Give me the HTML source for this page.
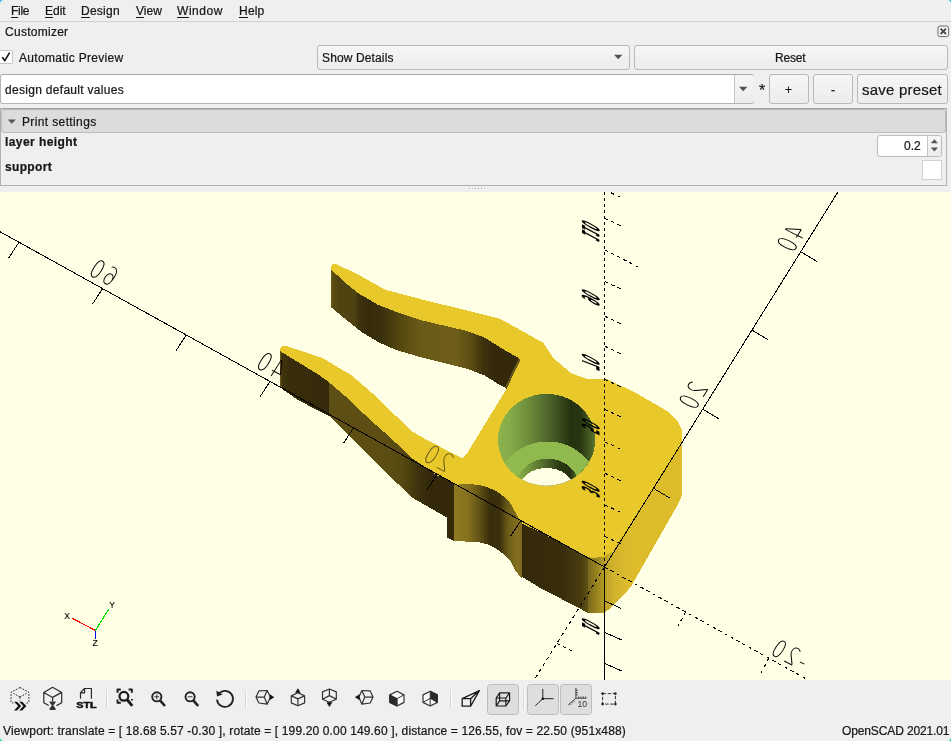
<!DOCTYPE html>
<html><head><meta charset="utf-8"><title>OpenSCAD</title>
<style>
html,body{margin:0;padding:0}
body{width:951px;height:741px;overflow:hidden;background:#efefef;position:relative;font-family:"Liberation Sans",sans-serif;font-size:12px;color:#161616;-webkit-text-stroke:0.22px #161616}
.t{position:absolute;white-space:pre;line-height:14px;height:14px;will-change:transform}
.abs{position:absolute;box-sizing:border-box}
svg{will-change:transform}
.btn{position:absolute;box-sizing:border-box;border:1px solid #b9b9b9;border-radius:3px;background:linear-gradient(#f6f6f6,#ececec);}
u{text-decoration:underline;text-underline-offset:1.6px;text-decoration-thickness:1px}
</style></head><body>
<!-- window corners -->
<svg class="abs" style="left:0;top:0" width="5" height="5" viewBox="0 0 5 5"><path d="M0 0 H4 A4 4 0 0 0 0 4 Z" fill="#29b6f0"/></svg>
<svg class="abs" style="left:946px;top:0" width="5" height="5" viewBox="0 0 5 5"><path d="M5 0 H1 A4 4 0 0 1 5 4 Z" fill="#1dd0d8"/></svg>
<svg class="abs" style="left:0;top:736px" width="5" height="5" viewBox="0 0 5 5"><path d="M0 5 H4 A4 4 0 0 1 0 1 Z" fill="#0fd8a8"/></svg>
<svg class="abs" style="left:946px;top:736px" width="5" height="5" viewBox="0 0 5 5"><path d="M5 5 H1 A4 4 0 0 0 5 1 Z" fill="#0ce080"/></svg>

<!-- menu bar -->
<div id="menubar">
<span class="t" style="left:10.6px;top:4.2px;letter-spacing:-0.3px"><u>F</u>ile</span>
<span class="t" style="left:45.4px;top:4.2px"><u>E</u>dit</span>
<span class="t" style="left:81.3px;top:4.2px;letter-spacing:0.25px"><u>D</u>esign</span>
<span class="t" style="left:135.5px;top:4.2px;letter-spacing:0.07px"><u>V</u>iew</span>
<span class="t" style="left:177.4px;top:4.2px;letter-spacing:0.54px"><u>W</u>indow</span>
<span class="t" style="left:238.5px;top:4.2px;letter-spacing:0.2px"><u>H</u>elp</span>
</div>
<div class="abs" style="left:0;top:21px;width:951px;height:1px;background:#d2d2d2"></div>

<!-- customizer dock -->
<span class="t" style="left:4.5px;top:25px;letter-spacing:0.27px">Customizer</span>
<svg class="abs" style="left:937px;top:25px" width="13" height="13" viewBox="0 0 13 13"><rect x="1" y="1" width="10.6" height="10.6" rx="2" fill="#f4f4f4" stroke="#5a5a5a" stroke-width="0.9"/><path d="M3.6 3.6 L9 9 M9 3.6 L3.6 9" stroke="#4a4a4a" stroke-width="1.9" stroke-linecap="butt"/></svg>

<!-- row 1 -->
<div class="abs" style="left:0;top:50px;width:13px;height:14px;background:#fff;border:1px solid #c6c6c6;border-left:none;border-radius:0 2px 2px 0"></div>
<svg class="abs" style="left:0;top:50px" width="14" height="14" viewBox="0 0 14 14"><path d="M2.2 7.2 L4.8 10.6 L9.6 2.6" fill="none" stroke="#1a1a1a" stroke-width="1.7"/></svg>
<span class="t" style="left:19px;top:50.5px;letter-spacing:0.3px">Automatic Preview</span>
<div class="btn" style="left:317px;top:45px;width:313px;height:24.5px"></div>
<span class="t" style="left:322.2px;top:50.5px;letter-spacing:0.13px">Show Details</span>
<svg class="abs" style="left:613px;top:54px" width="10" height="6" viewBox="0 0 10 6"><path d="M1 0.8 L9.4 0.8 L5.2 5.2 Z" fill="#555"/></svg>
<div class="btn" style="left:634px;top:45px;width:313.5px;height:24.5px"></div>
<span class="t" style="left:775.4px;top:50.5px;letter-spacing:-0.16px">Reset</span>

<!-- row 2 -->
<div class="abs" style="left:0;top:74px;width:754px;height:30px;background:#fff;border:1px solid #b4b4b4;border-top-color:#a8a8a8;border-radius:3px"></div>
<div class="abs" style="left:733.5px;top:75px;width:20px;height:28px;background:linear-gradient(#f6f6f6,#ececec);border-left:1px solid #c4c4c4;border-radius:0 3px 3px 0"></div>
<svg class="abs" style="left:737.5px;top:86px" width="10" height="6" viewBox="0 0 10 6"><path d="M1 0.8 L9.4 0.8 L5.2 5.2 Z" fill="#555"/></svg>
<span class="t" style="left:4.5px;top:82.5px;letter-spacing:0.3px">design default values</span>
<span class="t" style="left:758.6px;top:83.5px;font-size:16px">*</span>
<div class="btn" style="left:769px;top:74px;width:40px;height:30px"></div>
<span class="t" style="left:785px;top:82.5px">+</span>
<div class="btn" style="left:813px;top:74px;width:40px;height:30px"></div>
<span class="t" style="left:831px;top:82.5px">-</span>
<div class="btn" style="left:857px;top:74px;width:90.5px;height:30px"></div>
<span class="t" style="left:862px;top:80.5px;font-size:15px;line-height:17px;height:17px;letter-spacing:0.22px">save preset</span>

<!-- parameter frame -->
<div class="abs" style="left:0;top:108px;width:947px;height:78px;border:1px solid #b0b0b0;border-top-color:#a6a6a6"></div>
<div class="abs" style="left:1px;top:109px;width:945px;height:23.5px;background:#dcdcdc;border:1px solid #bebebe;border-top-color:#b4b4b4;border-radius:3px"></div>
<svg class="abs" style="left:7px;top:119px" width="10" height="6" viewBox="0 0 10 6"><path d="M0.8 0.6 L8.8 0.6 L4.8 4.8 Z" fill="#555"/></svg>
<span class="t" style="left:22.2px;top:114.5px;letter-spacing:0.37px">Print settings</span>
<span class="t" style="left:5px;top:135px;font-weight:bold;letter-spacing:0.42px">layer height</span>
<span class="t" style="left:5px;top:160px;font-weight:bold;letter-spacing:0.34px">support</span>
<div class="abs" style="left:877px;top:134.5px;width:64.5px;height:22px;background:#fff;border:1px solid #bcbcbc;border-radius:3px"></div>
<div class="abs" style="left:927px;top:135.5px;width:13.5px;height:20px;background:linear-gradient(#f6f6f6,#ececec);border-left:1px solid #c4c4c4;border-radius:0 3px 3px 0"></div>
<svg class="abs" style="left:929.5px;top:138px" width="9" height="15" viewBox="0 0 9 15"><path d="M0.8 5.2 L8 5.2 L4.4 1.2 Z M0.8 9.6 L8 9.6 L4.4 13.6 Z" fill="#555"/></svg>
<span class="t" style="left:904px;top:138.5px">0.2</span>
<div class="abs" style="left:922px;top:160px;width:20px;height:20px;background:#fff;border:1px solid #d0d0d0;border-radius:1px"></div>

<!-- splitter dots -->
<svg class="abs" style="left:466px;top:186px" width="24" height="6" viewBox="466 186 24 6"><g fill="#a8a8a8"><rect x="469" y="188" width="1" height="1"/><rect x="472" y="188" width="1" height="1"/><rect x="475" y="188" width="1" height="1"/><rect x="478" y="188" width="1" height="1"/><rect x="481" y="188" width="1" height="1"/><rect x="484" y="188" width="1" height="1"/></g><g fill="#fff"><rect x="470" y="189" width="1" height="1"/><rect x="473" y="189" width="1" height="1"/><rect x="476" y="189" width="1" height="1"/><rect x="479" y="189" width="1" height="1"/><rect x="482" y="189" width="1" height="1"/><rect x="485" y="189" width="1" height="1"/></g></svg>

<!-- VIEWPORT -->
<svg id="vp" class="abs" style="left:0;top:192px" width="951" height="488" viewBox="0 192 951 488">
<rect x="0" y="192" width="951" height="488" fill="#ffffe5"/>
<!--VP0--><defs>
<linearGradient id="gW1" gradientUnits="userSpaceOnUse" x1="331" y1="0" x2="521" y2="0">
<stop offset="0" stop-color="#6e5d19"/><stop offset="0.012" stop-color="#584b13"/><stop offset="0.045" stop-color="#4f4411"/><stop offset="0.125" stop-color="#4d4210"/><stop offset="0.15" stop-color="#3c310d"/><stop offset="0.2" stop-color="#352b0b"/><stop offset="0.27" stop-color="#3a300c"/><stop offset="0.36" stop-color="#54470f"/><stop offset="0.47" stop-color="#6a5a18"/><stop offset="0.66" stop-color="#6e5e19"/><stop offset="0.74" stop-color="#5a4c13"/><stop offset="0.8" stop-color="#3d320d"/><stop offset="0.86" stop-color="#342a0b"/><stop offset="1" stop-color="#33290a"/>
</linearGradient>
<linearGradient id="gW2" gradientUnits="userSpaceOnUse" x1="280" y1="0" x2="455" y2="0">
<stop offset="0" stop-color="#6e5d19"/><stop offset="0.012" stop-color="#3f340d"/><stop offset="0.05" stop-color="#382e0b"/><stop offset="0.28" stop-color="#342a0b"/><stop offset="0.283" stop-color="#5e5014"/><stop offset="0.6" stop-color="#5c4e13"/><stop offset="0.7" stop-color="#564911"/><stop offset="0.8" stop-color="#3a300c"/><stop offset="0.86" stop-color="#33290a"/><stop offset="1" stop-color="#33290a"/>
</linearGradient>
<linearGradient id="gW3" gradientUnits="userSpaceOnUse" x1="454" y1="0" x2="523" y2="0">
<stop offset="0" stop-color="#8e7a22"/><stop offset="0.2" stop-color="#86721f"/><stop offset="0.38" stop-color="#5e5014"/><stop offset="0.52" stop-color="#382e0b"/><stop offset="0.66" stop-color="#3a300c"/><stop offset="0.78" stop-color="#6b5b18"/><stop offset="0.92" stop-color="#84701f"/><stop offset="0.99" stop-color="#7a681c"/><stop offset="1" stop-color="#352b0b"/>
</linearGradient>
<linearGradient id="gW4" gradientUnits="userSpaceOnUse" x1="522" y1="0" x2="605" y2="0">
<stop offset="0" stop-color="#342a0b"/><stop offset="0.5" stop-color="#382e0b"/><stop offset="0.72" stop-color="#4a3e0f"/><stop offset="0.79" stop-color="#5e5014"/><stop offset="0.8" stop-color="#7a681c"/><stop offset="0.9" stop-color="#98831f"/><stop offset="1" stop-color="#b89e27"/>
</linearGradient>
<linearGradient id="gW5" gradientUnits="userSpaceOnUse" x1="604" y1="0" x2="628" y2="0">
<stop offset="0" stop-color="#ba9f27"/><stop offset="0.4" stop-color="#d0b22b"/><stop offset="1" stop-color="#ddbc2c"/>
</linearGradient>
<linearGradient id="gH1" gradientUnits="userSpaceOnUse" x1="498" y1="0" x2="596" y2="0">
<stop offset="0" stop-color="#8db34c"/><stop offset="0.12" stop-color="#86ab48"/><stop offset="0.3" stop-color="#6f8f3b"/><stop offset="0.45" stop-color="#577130"/><stop offset="0.6" stop-color="#3f5322"/><stop offset="0.74" stop-color="#26320f"/><stop offset="0.84" stop-color="#283512"/><stop offset="0.92" stop-color="#41551f"/><stop offset="1" stop-color="#5e7a33"/>
</linearGradient>
<linearGradient id="gH2" gradientUnits="userSpaceOnUse" x1="519" y1="0" x2="577" y2="0">
<stop offset="0" stop-color="#86ab48"/><stop offset="0.2" stop-color="#6f8f3b"/><stop offset="0.45" stop-color="#4f672a"/><stop offset="0.7" stop-color="#2c3a14"/><stop offset="0.88" stop-color="#26320f"/><stop offset="1" stop-color="#4a6127"/>
</linearGradient>
<clipPath id="cHole"><ellipse cx="546.6" cy="439.8" rx="48.6" ry="45.9"/></clipPath>
</defs>
<g shape-rendering="crispEdges">
<!-- walls -->
<polygon fill="url(#gW1)" points="331.2,269.4 344.4,282.1 357.9,293 378.1,304.9 400.1,313.3 421.5,320.3 467,331 485.2,337.9 500,347.3 520.6,359.3 506.7,388.6 500,385.1 485,375.7 467,368.7 421.5,357.4 395,349.6 378.1,342 361.3,331.9 344.4,318.4 331.2,307.4"/>
<polygon fill="url(#gW2)" points="280.3,351.3 319.1,375 329.4,382.6 349.6,400 370,419.8 390.3,437.5 412.2,458.6 437.5,475.5 451,482.2 454.6,483 454.6,541.3 446.7,537.5 446.7,517.4 411.4,497.2 329.4,416.4 297.9,400 280.3,387.6"/>
<polygon fill="url(#gW3)" points="454.3,483 455.1,484.7 466.5,484.2 477.9,484.7 487.3,487.2 496.8,491.4 504.4,497 510,502.7 513.8,509.3 517.6,516 522.4,523.6 522.4,578.4 521.4,578.4 515.7,570.9 510,560.4 504.4,554.8 496.8,549.1 487.3,544.4 477.9,542.1 455,541 454.3,541.3"/>
<polygon fill="url(#gW4)" points="522.2,523.6 540,532 585.6,556.5 592.3,558.2 604.2,556.5 604.2,612.5 597.4,613.4 587.3,612.7 578.8,608 540,587.8 522.2,577"/>
<polygon fill="#ddbc2c" points="604,556.5 612.6,551.5 679,448 682,438 682,494.8 680,500 675.6,508.5 631.8,585.2 619.3,599.6 607.5,610.5 604,612.5"/>
<polygon fill="url(#gW5)" points="604,556.5 612.6,551.5 628,527 628,590 619.3,599.6 607.5,610.5 604,612.5"/>
<polygon fill="#66561a" points="520.6,359.3 506.7,388.6 504.9,387.7 518.6,358.2"/>
<polygon fill="#e3c22c" points="680.6,441 682,438 682,494.8 680.6,498"/>
<!-- top face -->
<polygon fill="#e9c82b" points="331.2,266 332.6,264.3 336.8,264.3 359.6,275.3 384.9,289.7 420,298.9 436.7,303.1 460,308.8 500.4,318.9 543.3,342.9 553.4,358 571,373.2 586.2,378.7 606.4,378.7 636.7,393.4 667,411 677,420 681.5,429 682,438 679,448 612.6,551.5 604,556.5 592.3,558.2 585.6,556.5 540,532 522.2,523.6 517.6,516 513.8,509.3 510,502.7 504.4,497 496.8,491.4 487.3,487.2 477.9,484.7 466.5,484.2 455.1,484.7 451,482.2 437.5,475.5 412.2,458.6 390.3,437.5 370,419.8 349.6,400 329.4,382.6 319.1,375 280.3,351.3 280.3,347.9 282.8,346.2 287,346.2 322.4,358 351.1,375 370,391.1 390.3,410.5 412.2,431.6 425.7,439.2 461.1,457.8 462.8,457.8 467,453.5 506.7,388.6 520.6,359.3 500,347.3 485.2,337.9 467,331 421.5,320.3 400.1,313.3 378.1,304.9 357.9,293 344.4,282.1 331.2,269.4"/>
<!-- hole -->
<ellipse cx="546.6" cy="439.8" rx="48.6" ry="45.9" fill="url(#gH1)"/>
<g clip-path="url(#cHole)">
<ellipse cx="547.3" cy="487.5" rx="50" ry="46" fill="#90ba4e"/>
<ellipse cx="547.5" cy="492" rx="33.5" ry="33.5" fill="url(#gH2)"/>
<ellipse cx="546.5" cy="486.5" rx="26" ry="18.5" fill="#ffffe5"/>
</g>
</g>
<!--VP1--><!--AX0--><g fill="none" stroke="#000" stroke-width="1" shape-rendering="crispEdges">
<path d="M604.5 567.0 L0 231.7 M604.5 567.0 L838.2 191.5 M604.5 567.0 V681 M19.0 242.2 l-10.2 15.6 M102.6 288.6 l-10.2 15.6 M186.3 335.0 l-10.2 15.6 M270.0 381.5 l-10.2 15.6 M353.6 427.8 l-10.2 15.6 M437.2 474.2 l-10.2 15.6 M520.8 520.6 l-10.2 15.6 M653.5 488.3 l16 9.6 M702.8 409.1 l16 9.6 M752.0 330.1 l16 9.6 M800.8 251.7 l16 9.6 M604.5 600.9 l17 7.6 M604.5 632.3 l17 7.6 M604.5 663.3 l17 7.6"/>
<path stroke-dasharray="3.43 3.43" d="M604.5 567.0 L812 682.1 M556.8 643.6 l16 7.8 M605 536.5 l18 8.4 M605 505 l18 8.4 M605 473.3 l18 8.4 M605 441.9 l18 8.4 M605 409.5 l18 8.4 M605 379.5 l18 8.4 M605 346.3 l18 8.4 M605 316.3 l18 8.4 M605 281.6 l18 8.4 M605 218.4 l18 8.4 M605 190 l18 8.4 M605 250 l34 17.4"/>
<path stroke-dasharray="3.54 3.54" d="M604.5 567.0 L533 681.8 M685.5 611.9 l-7.5 14.5 M768.8 658.1 l-7.5 14.5"/>
<path stroke-dasharray="3 3" d="M604.5 567.0 V191"/>
</g>
<g fill="none" stroke-width="1.1" shape-rendering="crispEdges"><path d="M95.4 630.5 L72.1 618.2" stroke="#ff0000"/><path d="M95.4 630.5 L108.9 608.9" stroke="#00e000"/><path d="M95.4 630.5 V639" stroke="#0000ff"/></g>
<g font-family="'Liberation Sans',sans-serif" font-size="8.6px" fill="#000" stroke="#000" stroke-width="0.1" text-anchor="middle"><text x="67.2" y="619.2">X</text><text x="112" y="607.6">Y</text><text x="95.2" y="645.6">Z</text></g>
<!--AX1--><!--LB0--><g font-family="'DejaVu Sans','Liberation Sans',sans-serif" font-weight="200" font-size="20px" fill="#000">
<text transform="matrix(-0.8631 -0.4663 -0.6996 1.1043 111.04 287.11)" letter-spacing="2.51" >60</text>
<text transform="matrix(-0.8631 -0.4663 -0.6996 1.1043 278.44 379.97)" letter-spacing="2.51" >40</text>
<text transform="matrix(-0.8631 -0.4663 -0.6996 1.1043 445.64 472.71)" letter-spacing="2.51" opacity="0.55">20</text>
<text transform="matrix(-0.8433 -0.4266 -0.6722 1.0494 801.38 670.25)" letter-spacing="2.82" >-20</text>
<text transform="matrix(-0.5060 0.8036 1.2071 0.6104 709.07 388.57)" letter-spacing="2.67" >20</text>
<text transform="matrix(-0.5060 0.8036 1.2071 0.6104 807.07 231.18)" letter-spacing="2.67" >40</text>
<text transform="matrix(0.0000 -0.3869 -1.2003 -0.6379 582.40 234.11)" letter-spacing="-0.57" font-weight="700">110</text>
<text transform="matrix(0.0000 -0.3869 -1.2003 -0.6379 582.40 297.91)" letter-spacing="-0.57" font-weight="700">90</text>
<text transform="matrix(0.0000 -0.3869 -1.2003 -0.6379 582.40 362.41)" letter-spacing="-0.57" font-weight="700">70</text>
<text transform="matrix(0.0000 -0.3869 -1.2003 -0.6379 582.40 426.91)" letter-spacing="-0.57" font-weight="700">50</text>
<text transform="matrix(0.0000 -0.3869 -1.2003 -0.6379 582.40 489.41)" letter-spacing="-0.57" font-weight="700">30</text>
<text transform="matrix(0.0000 -0.3869 -1.2003 -0.6379 582.40 626.91)" letter-spacing="-0.57" font-weight="700">10</text>
</g>
<!--LB1-->
</svg>

<!-- TOOLBAR -->
<!--TB0--><svg class="abs" style="left:0;top:680px" width="951" height="40" viewBox="0 680 951 40">
<g fill="none" stroke="#2b2b2b" stroke-width="1.1" stroke-linejoin="round">
<!-- checked buttons -->
<g fill="#dedede" stroke="#bdbdbd" stroke-width="1">
<rect x="487.5" y="684.5" width="31" height="30" rx="3"/>
<rect x="527.5" y="684.5" width="31" height="30" rx="3"/>
<rect x="560.5" y="684.5" width="31" height="30" rx="3"/>
</g>
<!-- separators -->
<g stroke="#d6d6d6" stroke-width="1"><path d="M106.5 690 V709 M245.5 690 V709 M450.5 690 V709 M523.5 690 V709"/></g>
<g stroke="#fbfbfb" stroke-width="1"><path d="M107.5 690 V709 M246.5 690 V709 M451.5 690 V709 M524.5 690 V709"/></g>
<!-- 1 preview -->
<path d="M19.9 687.5 L28.9 692.3 V702 L26 703.8 M19.9 687.5 L11 692.3 V702 L13.2 703.4 M19.9 697 L13.4 693.4 M19.9 697 L26.4 693.4 M19.9 697 V700.6" stroke-dasharray="1.7 1.3" stroke-width="1"/>
<path d="M14 701.8 h3 l4.2 4.3 l-4.2 4.3 h-3 l4.2 -4.3 Z M19.2 701.8 h3 l4.2 4.3 l-4.2 4.3 h-3 l4.2 -4.3 Z" fill="#111" stroke="none"/>
<!-- 2 render -->
<path d="M52.6 687.3 L61.7 692.4 V702.8 L56.5 705.6 M52.6 687.3 L43.8 692.4 V702.8 L48.7 705.6 M43.8 692.4 L52.6 697.4 L61.7 692.4 M52.6 697.4 V701.5" stroke-width="1.2"/>
<path d="M49.6 701.4 h6 v1 l-2.3 3 l2.3 3 v1.6 h-6 v-1.6 l2.3 -3 l-2.3 -3 Z" fill="#333" stroke="none"/>
<!-- 3 STL -->
<path d="M80.5 698.8 V692.6 L84.5 688.5 H91.4 V698.8 M80.5 692.8 H84.6 V688.6" stroke-width="1.2"/>
<!-- 4 view all -->
<path d="M117.5 692.8 V689.5 H120.8 M128.6 689.5 H131.9 V692.8 M117.5 699.4 V702.8 H120.8 M131.9 699 V700.6" stroke-width="1.9" stroke="#1c1c1c"/>
<circle cx="123.9" cy="696.3" r="4.4" stroke-width="2.3" stroke="#1c1c1c"/>
<path d="M127.2 699.8 L132.3 705.9" stroke-width="2.9" stroke="#1c1c1c"/>
<!-- 5 zoom in -->
<circle cx="156.8" cy="696.8" r="4.6" stroke-width="1.9" stroke="#222"/>
<path d="M160.2 700.6 L165 706" stroke-width="2.6" stroke="#222"/>
<path d="M154.4 696.8 H159.2 M156.8 694.4 V699.2" stroke-width="0.9" stroke="#222"/>
<!-- 6 zoom out -->
<circle cx="190.1" cy="696.8" r="4.6" stroke-width="1.9" stroke="#222"/>
<path d="M193.5 700.6 L198.2 706" stroke-width="2.6" stroke="#222"/>
<path d="M187.7 696.8 H192.5" stroke-width="0.9" stroke="#222"/>
<!-- 7 reset view -->
<path d="M218.2 694.6 A8 8 0 1 1 217 699.6" stroke-width="1.8" stroke="#222"/>
<path d="M216.3 690.6 L217 696.6 L222.6 694.4 Z" fill="#222" stroke="none"/>
<!-- 8 view right -->
<path d="M258.9 690.9 L267.2 690.5 L270.4 697.1 L267.2 704.2 L258.9 703 L256 697.1 Z M256 697.1 L264.3 697.1 L267.2 690.5 M264.3 697.1 L267.2 704.2" stroke-width="1.2" stroke="#333"/>
<path d="M270 694.7 L273.8 697.2 L270 699.6 Z" fill="#111" stroke="#111" stroke-width="0.6"/>
<!-- 9 view top -->
<path d="M297.9 692.7 L304.6 695.9 V702.9 L297.9 705.7 L291.3 702.9 V695.9 Z M291.3 695.9 L297.9 698.9 L304.6 695.9 M297.9 698.9 V705.7" stroke-width="1.2" stroke="#333"/>
<path d="M295.6 692.6 L297.9 688.7 L300.2 692.6 Z" fill="#111" stroke="#111" stroke-width="0.6"/>
<!-- 10 view bottom -->
<path d="M329.4 689 L336.3 691.9 V699.3 L329.4 702.3 L322.5 699.3 V691.9 Z M329.4 689 V695.6 M322.5 699.3 L329.4 695.6 L336.3 699.3" stroke-width="1.2" stroke="#333"/>
<path d="M327 702.6 L329.4 706.6 L331.8 702.6 Z" fill="#111" stroke="#111" stroke-width="0.6"/>
<!-- 11 view left -->
<path d="M370.2 690.9 L361.9 690.5 L358.9 697.1 L361.9 704.2 L370.2 703 L373 697.1 Z M373 697.1 L364.8 697.1 L361.9 690.5 M364.8 697.1 L361.9 704.2" stroke-width="1.2" stroke="#333"/>
<path d="M359.2 694.7 L355.4 697.2 L359.2 699.6 Z" fill="#111" stroke="#111" stroke-width="0.6"/>
<!-- 12 front -->
<path d="M397.1 691.2 L404 694.9 V702.4 L397.1 706 L389.8 702.4 V694.9 Z" stroke-width="1.2" stroke="#333" fill="#fafafa"/>
<path d="M389.8 694.9 L397.1 698.6 V706 L389.8 702.4 Z" fill="#2a2a2a" stroke="#2a2a2a" stroke-width="1"/>
<path d="M397.1 698.6 L404 694.9" stroke-width="1" stroke="#333"/>
<!-- 13 back -->
<path d="M430.2 691.2 L437.4 694.9 V702.4 L430.2 706 L423 702.4 V694.9 Z" stroke-width="1.2" stroke="#333" fill="#fafafa"/>
<path d="M430.2 691.2 L437.4 694.9 V702.4 L430.2 698.4 Z" fill="#2a2a2a" stroke="#2a2a2a" stroke-width="0.8"/>
<path d="M430.2 698.4 V706 M430.2 698.4 L423 702.4" stroke-width="1" stroke="#333"/>
<!-- 14 perspective -->
<path d="M462.2 698.7 H470.6 V706.2 H462.2 Z M462.2 698.7 L479.4 690.6 L470.6 698.7 M479.4 690.6 L470.6 706.2" stroke-width="1.3" stroke="#1a1a1a"/>
<!-- 15 orthogonal -->
<path d="M496.2 698 H505.9 V706 H496.2 Z M499.6 692.8 H509.6 V700.8 H499.6 Z M496.2 698 L499.6 692.8 M505.9 698 L509.6 692.8 M505.9 706 L509.6 700.8 M496.2 706 L499.6 700.8" stroke-width="1.2" stroke="#1a1a1a"/>
<!-- 16 axes -->
<path d="M542.8 688.9 V698.7 H553.5 M542.8 698.7 L535.3 705.8" stroke-width="1" stroke="#222"/>
<circle cx="542.8" cy="698.7" r="1.3" fill="#111" stroke="none"/>
<!-- 17 scale markers -->
<path d="M575.9 688 V698.2 H586.2 M575.9 698.2 L568.2 705 M575.9 690.2 h1.8 M575.9 692.5 h1.8 M575.9 694.8 h1.8 M578.6 698.2 v-1.7 M581 698.2 v-1.7 M583.4 698.2 v-1.7 M585.8 698.2 v-1.7 M573.4 700.4 l1.2 1.3 M571.6 702 l1.2 1.3 M569.8 703.6 l1.2 1.3" stroke-width="0.9" stroke="#333"/>
<!-- 18 crosshairs/edges -->
<path d="M602.6 693.6 H615.4 V704.1 H602.6 Z" stroke-dasharray="3.4 1.6" stroke-width="1" stroke="#333"/>
<g fill="#222" stroke="none"><circle cx="602.6" cy="693.6" r="1.3"/><circle cx="615.4" cy="693.6" r="1.3"/><circle cx="602.6" cy="704.1" r="1.3"/><circle cx="615.4" cy="704.1" r="1.3"/></g>
</g>
<text x="76.3" y="708.4" font-family="'Liberation Sans',sans-serif" font-weight="bold" font-size="9.3px" fill="#111" stroke="#111" stroke-width="0.5" textLength="20.4" lengthAdjust="spacingAndGlyphs">STL</text>
<text x="577.4" y="706.7" font-family="'Liberation Sans',sans-serif" font-size="8.2px" fill="#333" textLength="9.6" lengthAdjust="spacingAndGlyphs">10</text>
</svg>
<!--TB1-->

<!-- status bar -->
<span class="t" style="left:2.7px;top:723.5px;letter-spacing:0.137px">Viewport: translate = [ 18.68 5.57 -0.30 ], rotate = [ 199.20 0.00 149.60 ], distance = 126.55, fov = 22.50 (951x488)</span>
<span class="t" style="left:841.5px;top:723.5px;letter-spacing:-0.127px">OpenSCAD 2021.01</span>
</body></html>
